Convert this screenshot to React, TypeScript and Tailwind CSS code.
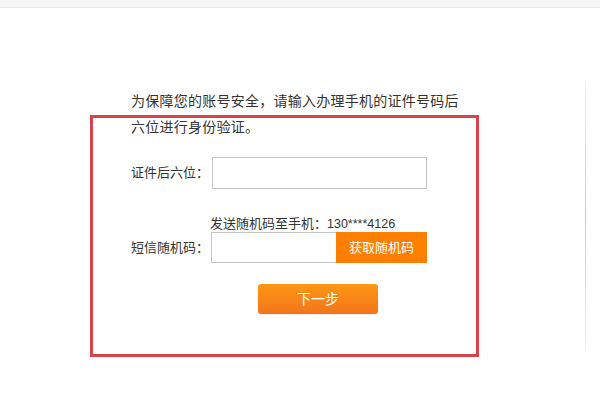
import React from 'react';

const font = { fontFamily: '"Liberation Sans", "Noto Sans CJK SC", sans-serif' };

export default function App() {
  return (
    <div
      className="relative w-[600px] h-[397px] overflow-hidden bg-white text-[#333]"
      style={font}
    >
      {/* top strip */}
      <div className="h-[8px] bg-[#f5f5f5] border-b border-[#e6e6e6]" />

      {/* form */}
      <div className="pl-[131px] pt-[80px]">
        <p className="w-[334px] text-[14px] leading-[26px] tracking-[0.25px] text-[#333]">
          为保障您的账号安全，请输入办理手机的证件号码后六位进行身份验证。
        </p>

        <div className="mt-[17px] flex items-center">
          <span className="w-[81px] text-[13px] text-[#333]">证件后六位：</span>
          <input className="w-[215px] h-[32px] border border-[#c4c4c4] outline-none px-2 text-[13px]" />
        </div>

        <div className="mt-[26px] ml-[79px] h-[17px] text-[13px] leading-[17px] text-[#333] whitespace-nowrap">
          发送随机码至手机：<span className="text-[12.5px]">130****4126</span>
        </div>

        <div className="flex items-center">
          <span className="w-[80px] text-[13px] text-[#333]">短信随机码：</span>
          <input className="w-[125px] h-[31px] border border-r-0 border-[#c4c4c4] outline-none px-2 text-[13px]" />
          <button className="w-[91px] h-[31px] bg-[#ff7f00] text-white text-[13px]">
            获取随机码
          </button>
        </div>

        <button className="mt-[21px] ml-[127px] w-[120px] h-[30px] rounded-[3px] bg-gradient-to-b from-[#ff9712] to-[#f2741c] text-white text-[14px] shadow-[0_1px_1px_rgba(0,0,0,0.08)]">
          下一步
        </button>
      </div>

      {/* right panel edge */}
      <div className="absolute left-[585px] top-[80px] w-px h-[272px] bg-gradient-to-b from-[#f2f2f2] via-[#c8c8c8] to-[#f2f2f2]" />

      {/* red annotation frame */}
      <div className="absolute left-[90px] top-[115px] w-[389px] h-[242px] border-[3px] border-[#d8434b] pointer-events-none" />
    </div>
  );
}
